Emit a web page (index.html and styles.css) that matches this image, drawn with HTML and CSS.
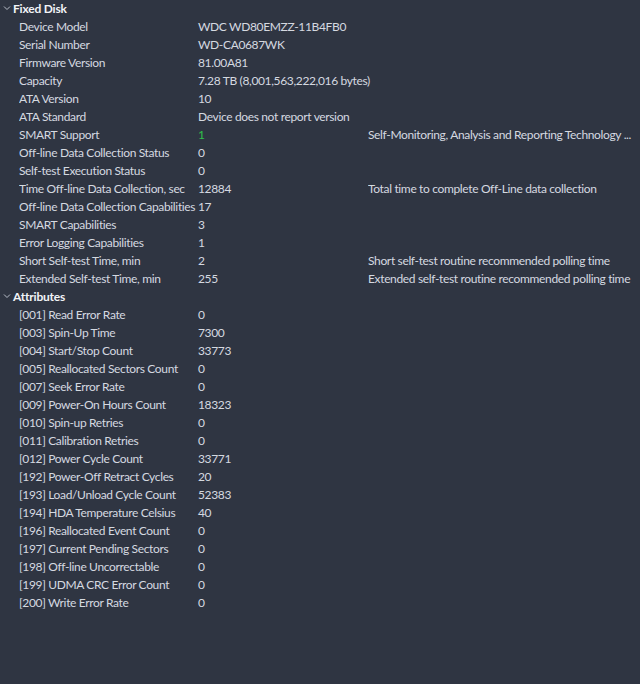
FILE: index.html
```html
<!DOCTYPE html>
<html>
<head>
<meta charset="utf-8">
<link rel="stylesheet" href="styles.css">
</head>
<body>
<div class="tree">
  <div class="group">
    <div class="hdr"><svg class="chev" width="8" height="6" viewBox="0 0 8 6"><path d="M1 1.5 L4 4.5 L7 1.5" fill="none" stroke="#b8bec9" stroke-width="1"/></svg><span>Fixed Disk</span></div>
    <div class="row"><span class="k">Device Model</span><span class="v">WDC WD80EMZZ-11B4FB0</span><span class="d"></span></div>
    <div class="row"><span class="k">Serial Number</span><span class="v">WD-CA0687WK</span><span class="d"></span></div>
    <div class="row"><span class="k">Firmware Version</span><span class="v">81.00A81</span><span class="d"></span></div>
    <div class="row"><span class="k">Capacity</span><span class="v">7.28 TB (8,001,563,222,016 bytes)</span><span class="d"></span></div>
    <div class="row"><span class="k">ATA Version</span><span class="v">10</span><span class="d"></span></div>
    <div class="row"><span class="k">ATA Standard</span><span class="v">Device does not report version</span><span class="d"></span></div>
    <div class="row"><span class="k">SMART Support</span><span class="v green">1</span><span class="d">Self-Monitoring, Analysis and Reporting Technology ...</span></div>
    <div class="row"><span class="k">Off-line Data Collection Status</span><span class="v">0</span><span class="d"></span></div>
    <div class="row"><span class="k">Self-test Execution Status</span><span class="v">0</span><span class="d"></span></div>
    <div class="row"><span class="k">Time Off-line Data Collection, sec</span><span class="v">12884</span><span class="d">Total time to complete Off-Line data collection</span></div>
    <div class="row"><span class="k">Off-line Data Collection Capabilities</span><span class="v">17</span><span class="d"></span></div>
    <div class="row"><span class="k">SMART Capabilities</span><span class="v">3</span><span class="d"></span></div>
    <div class="row"><span class="k">Error Logging Capabilities</span><span class="v">1</span><span class="d"></span></div>
    <div class="row"><span class="k">Short Self-test Time, min</span><span class="v">2</span><span class="d">Short self-test routine recommended polling time</span></div>
    <div class="row"><span class="k">Extended Self-test Time, min</span><span class="v">255</span><span class="d">Extended self-test routine recommended polling time</span></div>
  </div>
  <div class="group">
    <div class="hdr"><svg class="chev" width="8" height="6" viewBox="0 0 8 6"><path d="M1 1.5 L4 4.5 L7 1.5" fill="none" stroke="#b8bec9" stroke-width="1"/></svg><span>Attributes</span></div>
    <div class="row"><span class="k">[001] Read Error Rate</span><span class="v">0</span><span class="d"></span></div>
    <div class="row"><span class="k">[003] Spin-Up Time</span><span class="v">7300</span><span class="d"></span></div>
    <div class="row"><span class="k">[004] Start/Stop Count</span><span class="v">33773</span><span class="d"></span></div>
    <div class="row"><span class="k">[005] Reallocated Sectors Count</span><span class="v">0</span><span class="d"></span></div>
    <div class="row"><span class="k">[007] Seek Error Rate</span><span class="v">0</span><span class="d"></span></div>
    <div class="row"><span class="k">[009] Power-On Hours Count</span><span class="v">18323</span><span class="d"></span></div>
    <div class="row"><span class="k">[010] Spin-up Retries</span><span class="v">0</span><span class="d"></span></div>
    <div class="row"><span class="k">[011] Calibration Retries</span><span class="v">0</span><span class="d"></span></div>
    <div class="row"><span class="k">[012] Power Cycle Count</span><span class="v">33771</span><span class="d"></span></div>
    <div class="row"><span class="k">[192] Power-Off Retract Cycles</span><span class="v">20</span><span class="d"></span></div>
    <div class="row"><span class="k">[193] Load/Unload Cycle Count</span><span class="v">52383</span><span class="d"></span></div>
    <div class="row"><span class="k">[194] HDA Temperature Celsius</span><span class="v">40</span><span class="d"></span></div>
    <div class="row"><span class="k">[196] Reallocated Event Count</span><span class="v">0</span><span class="d"></span></div>
    <div class="row"><span class="k">[197] Current Pending Sectors</span><span class="v">0</span><span class="d"></span></div>
    <div class="row"><span class="k">[198] Off-line Uncorrectable</span><span class="v">0</span><span class="d"></span></div>
    <div class="row"><span class="k">[199] UDMA CRC Error Count</span><span class="v">0</span><span class="d"></span></div>
    <div class="row"><span class="k">[200] Write Error Rate</span><span class="v">0</span><span class="d"></span></div>
  </div>
</div>
</body>
</html>
```
FILE: styles.css
```css
html, body {
  margin: 0;
  padding: 0;
  background: #2f3542;
  height: 100%;
}
body {
  font-family: "Lato", "Noto Sans", sans-serif;
  font-size: 12px;
  letter-spacing: -0.35px;
  color: #d5d9e0;
  overflow: hidden;
}
.tree {
  display: flex;
  flex-direction: column;
}
.hdr {
  height: 18px;
  line-height: 17px;
  display: flex;
  align-items: flex-start;
  font-weight: 700;
  color: #f2f4f7;
  padding-left: 3px;
  letter-spacing: -0.2px;
}
.chev {
  margin-right: 2px;
  margin-top: 5px;
}
.row {
  height: 18px;
  line-height: 17px;
  display: grid;
  grid-template-columns: 179px 170px 1fr;
  align-items: start;
  padding-left: 19px;
  white-space: nowrap;
}
.k, .d {
  overflow: hidden;
}
.v {
  overflow: visible;
}
.green {
  color: #2fbf4a;
}
```
